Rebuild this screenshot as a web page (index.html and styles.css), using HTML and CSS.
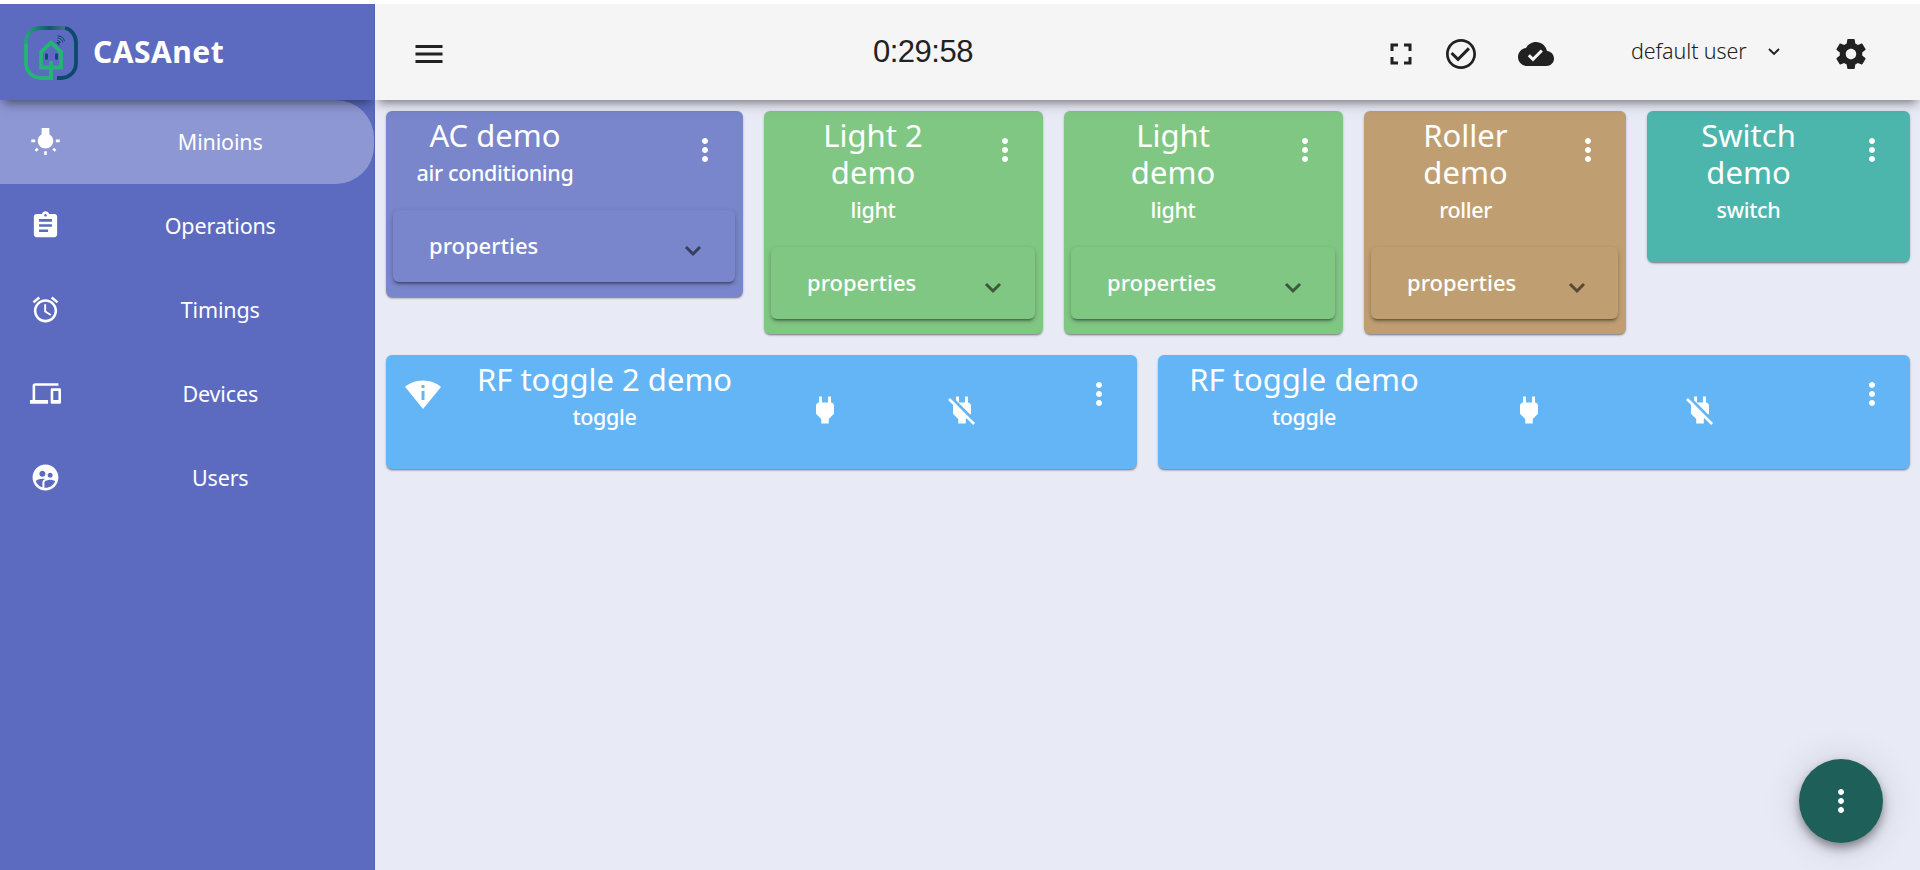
FILE: index.html
```html
<!DOCTYPE html>
<html lang="en">
<head>
<meta charset="utf-8">
<title>CASAnet</title>
<link rel="stylesheet" href="styles.css">
</head>
<body>
<svg class="defs" width="0" height="0">
  <symbol id="more" viewBox="0 0 24 24"><path d="M12 8c1.1 0 2-.9 2-2s-.9-2-2-2-2 .9-2 2 .9 2 2 2zm0 2c-1.1 0-2 .9-2 2s.9 2 2 2 2-.9 2-2-.9-2-2-2zm0 6c-1.1 0-2 .9-2 2s.9 2 2 2 2-.9 2-2-.9-2-2-2z"/></symbol>
  <symbol id="power" viewBox="0 0 24 24"><path d="M16.01 7L16 3h-2v4h-4V3H8v4h-.01C7 6.99 6 7.99 6 8.99v5.49L9.5 18v3h5v-3l3.5-3.51v-5.5c0-1-1-2-1.99-1.99z"/></symbol>
  <symbol id="power-off" viewBox="0 0 24 24"><path d="M18 14.49V9c0-1-1.01-2.01-2-2V3h-2v4h-4V3H8v2.48l9.51 9.5.49-.49zm-1.76 1.77L7.2 7.2l-.01.01L3.98 4 2.71 5.25l3.36 3.36C6.04 8.74 6 8.87 6 9v5.48L9.5 18v3h5v-3l.48-.48L19.45 22l1.26-1.28-4.47-4.46z"/></symbol>
  <symbol id="chevron" viewBox="0 0 18 12"><path d="M2 2l7 7 7-7" fill="none" stroke="currentColor" stroke-width="3"/></symbol>
</svg>
<div class="app">
  <aside class="sidebar">
    <div class="brand">
      <svg class="logo" viewBox="0 0 54 54">
        <defs><linearGradient id="top" x1="0" y1="0" x2="1" y2="0"><stop offset="0" stop-color="#22a877"/><stop offset=".6" stop-color="#12566c"/><stop offset="1" stop-color="#4d7186"/></linearGradient></defs>
        <g fill="none" stroke-width="3.8">
          <path d="M27 35v17H17C8 52 2 45 2 37V17" stroke="#22b573"/>
          <path d="M2 18C2 8 8 2 17 2h24" stroke="url(#top)"/>
          <path d="M41 2c6 1 11 7 11 15v20c0 9-7 15-15 15h-4" stroke="#0b4a6b"/>
          <path d="M17 41.500V26L27 16.500 37 26v15.500z" stroke="#22b573"/>
        </g>
        <path d="M21 28.500q1.500-2.500 3 0v4q-1.500 3-3 0zM31 28.500q1.500-2.500 3 0v4q-1.500 3-3 0z" fill="#0b4a6b"/>
        <path d="M32.500 16h3v4l-3-3z" fill="#0b4a6b"/>
        <g fill="none" stroke="#0b4a6b" stroke-width="1"><path d="M33.500 14.500q2 0 3 2.500M33.500 12q4 0 5.500 4.500M33.500 9.800q5.500.2 7.200 5.500"/></g>
      </svg>
      <span class="brand-name">CASAnet</span>
    </div>
    <nav class="nav">
      <a class="nav-item active"><svg class="nav-icon" viewBox="0 0 24 24"><path d="M3.550 18.540l1.410 1.410 1.800-1.790-1.410-1.410-1.800 1.790zM11 22.450h2V19.500h-2v2.950zM4 10.500H1v2h3v-2zm11-4.190V1.500H9v4.810C7.210 7.350 6 9.280 6 11.500c0 3.310 2.690 6 6 6s6-2.690 6-6c0-2.220-1.210-4.150-3-5.190zm5 4.190v2h3v-2h-3zm-2.760 7.660l1.790 1.800 1.410-1.410-1.800-1.790-1.400 1.400z"/></svg><span class="nav-label">Minioins</span></a>
      <a class="nav-item"><svg class="nav-icon" viewBox="0 0 24 24"><path d="M19 3h-4.180C14.400 1.840 13.300 1 12 1c-1.300 0-2.400.84-2.820 2H5c-1.100 0-2 .9-2 2v14c0 1.100.9 2 2 2h14c1.100 0 2-.9 2-2V5c0-1.100-.9-2-2-2zm-7 0c.55 0 1 .45 1 1s-.45 1-1 1-1-.45-1-1 .45-1 1-1zm2 14H7v-2h7v2zm3-4H7v-2h10v2zm0-4H7V7h10v2z"/></svg><span class="nav-label">Operations</span></a>
      <a class="nav-item"><svg class="nav-icon" viewBox="0 0 24 24"><path d="M22 5.720l-4.600-3.860-1.290 1.530 4.600 3.860L22 5.720zM7.880 3.390L6.600 1.860 2 5.710l1.290 1.530 4.590-3.850zM12.500 8H11v6l4.750 2.850.75-1.230-4-2.370V8zM12 4c-4.970 0-9 4.030-9 9s4.020 9 9 9c4.970 0 9-4.030 9-9s-4.030-9-9-9zm0 16c-3.870 0-7-3.130-7-7s3.130-7 7-7 7 3.130 7 7-3.130 7-7 7z"/></svg><span class="nav-label">Timings</span></a>
      <a class="nav-item"><svg class="nav-icon" viewBox="0 0 24 24"><path d="M4 6h18V4H4c-1.100 0-2 .9-2 2v11H0v3h14v-3H4V6zm19 2h-6c-.55 0-1 .45-1 1v10c0 .55.45 1 1 1h6c.55 0 1-.45 1-1V9c0-.55-.45-1-1-1zm-1 9h-4v-7h4v7z"/></svg><span class="nav-label">Devices</span></a>
      <a class="nav-item"><svg class="nav-icon" viewBox="0 0 24 24"><path d="M11.990 2c-5.520 0-10 4.480-10 10s4.480 10 10 10 10-4.480 10-10-4.480-10-10-10zm3.610 6.340c1.070 0 1.930.86 1.930 1.930 0 1.070-.86 1.930-1.930 1.930-1.070 0-1.930-.86-1.930-1.930-.01-1.070.86-1.930 1.930-1.930zm-6-1.580c1.300 0 2.360 1.060 2.360 2.360 0 1.300-1.060 2.360-2.360 2.360s-2.360-1.060-2.360-2.360c0-1.310 1.050-2.360 2.360-2.360zm0 9.130v3.750c-2.400-.75-4.300-2.600-5.140-4.960 1.050-1.120 3.670-1.690 5.140-1.690.53 0 1.200.08 1.900.22-1.640.87-1.900 2.020-1.900 2.680zM11.990 20c-.27 0-.53-.01-.79-.04v-4.070c0-1.420 2.940-2.130 4.400-2.130 1.070 0 2.920.39 3.840 1.150-1.170 2.970-4.060 5.090-7.450 5.090z"/></svg><span class="nav-label">Users</span></a>
    </nav>
  </aside>
  <div class="content">
    <header class="topbar">
      <svg class="icon menu-btn" viewBox="0 0 24 24"><path d="M3 18h18v-2H3v2zm0-5h18v-2H3v2zm0-7v2h18V6H3z"/></svg>
      <span class="clock">0:29:58</span>
      <div class="actions">
        <svg class="icon" viewBox="0 0 24 24"><path d="M7 14H5v5h5v-2H7v-3zm-2-4h2V7h3V5H5v5zm12 7h-3v2h5v-5h-2v3zM14 5v2h3v3h2V5h-5z"/></svg>
        <svg class="icon check" viewBox="0 0 24 24"><path d="M16.590 7.580L10 14.170l-3.590-3.580L5 12l5 5 8-8zM12 2C6.480 2 2 6.480 2 12s4.480 10 10 10 10-4.480 10-10S17.520 2 12 2zm0 18.200c-4.530 0-8.200-3.670-8.200-8.200S7.470 3.800 12 3.800s8.200 3.670 8.200 8.200-3.670 8.200-8.200 8.200z"/></svg>
        <svg class="icon cloud" viewBox="0 0 24 24"><path d="M19.350 10.040C18.670 6.590 15.640 4 12 4 9.110 4 6.600 5.640 5.350 8.040 2.340 8.360 0 10.910 0 14c0 3.310 2.690 6 6 6h13c2.760 0 5-2.240 5-5 0-2.640-2.050-4.780-4.650-4.960zM10 17l-3.500-3.500 1.410-1.410L10 14.170 15.180 9l1.410 1.410L10 17z"/></svg>
        <div class="user"><span class="user-name">default user</span><svg class="user-arrow" viewBox="0 0 12 8"><path d="M1 1l5 5 5-5" fill="none" stroke="currentColor" stroke-width="1.900"/></svg></div>
        <svg class="icon gear" viewBox="0 0 24 24"><path d="M19.430 12.980c.04-.32.07-.64.07-.98s-.03-.66-.07-.98l2.110-1.650c.19-.15.24-.42.12-.64l-2-3.460c-.12-.22-.39-.3-.61-.22l-2.490 1c-.52-.4-1.080-.73-1.690-.98l-.38-2.650C14.460 2.180 14.250 2 14 2h-4c-.25 0-.46.18-.49.42l-.38 2.650c-.61.25-1.170.59-1.690.98l-2.490-1c-.23-.09-.49 0-.61.22l-2 3.460c-.13.22-.07.49.12.64l2.110 1.650c-.04.32-.07.65-.07.98s.03.66.07.98l-2.110 1.650c-.19.15-.24.42-.12.64l2 3.460c.12.22.39.3.61.22l2.490-1c.52.4 1.080.73 1.690.98l.38 2.650c.03.24.24.42.49.42h4c.25 0 .46-.18.49-.42l.38-2.650c.61-.25 1.170-.59 1.690-.98l2.490 1c.23.09.49 0 .61-.22l2-3.460c.12-.22.07-.49-.12-.64l-2.110-1.650zM12 15.500c-1.930 0-3.500-1.570-3.500-3.500s1.570-3.500 3.500-3.500 3.500 1.570 3.500 3.500-1.570 3.500-3.500 3.500z"/></svg>
      </div>
    </header>
    <main class="board">
      <div class="row row-small">
        <section class="card indigo">
          <div class="head"><div class="titles"><h2 class="title">AC demo</h2><p class="kind">air conditioning</p></div><svg class="icon more"><use href="#more"/></svg></div>
          <div class="panel"><span class="panel-label">properties</span><svg class="chevron"><use href="#chevron"/></svg></div>
        </section>
        <section class="card green">
          <div class="head"><div class="titles"><h2 class="title">Light 2<br>demo</h2><p class="kind">light</p></div><svg class="icon more"><use href="#more"/></svg></div>
          <div class="panel"><span class="panel-label">properties</span><svg class="chevron"><use href="#chevron"/></svg></div>
        </section>
        <section class="card green">
          <div class="head"><div class="titles"><h2 class="title">Light<br>demo</h2><p class="kind">light</p></div><svg class="icon more"><use href="#more"/></svg></div>
          <div class="panel"><span class="panel-label">properties</span><svg class="chevron"><use href="#chevron"/></svg></div>
        </section>
        <section class="card brown narrow">
          <div class="head"><div class="titles"><h2 class="title">Roller<br>demo</h2><p class="kind">roller</p></div><svg class="icon more"><use href="#more"/></svg></div>
          <div class="panel"><span class="panel-label">properties</span><svg class="chevron"><use href="#chevron"/></svg></div>
        </section>
        <section class="card teal narrow">
          <div class="head"><div class="titles"><h2 class="title">Switch<br>demo</h2><p class="kind">switch</p></div><svg class="icon more"><use href="#more"/></svg></div>
        </section>
      </div>
      <div class="row row-wide">
        <section class="card blue">
          <div class="head wide-a"><svg class="icon more" viewBox="0 0 24 24"><path d="M12 3C6.950 3 3.150 4.850 0 7.230L12 22 24 7.250C20.850 4.870 17.050 3 12 3zm1 13h-2v-6h2v6zm-2-8V6h2v2h-2z"/></svg><div class="titles"><h2 class="title">RF toggle 2 demo</h2><p class="kind">toggle</p></div><svg class="icon plug"><use href="#power"/></svg><svg class="icon plug"><use href="#power-off"/></svg><svg class="icon more"><use href="#more"/></svg></div>
        </section>
        <section class="card blue">
          <div class="head wide-b"><div class="titles"><h2 class="title">RF toggle demo</h2><p class="kind">toggle</p></div><svg class="icon plug"><use href="#power"/></svg><svg class="icon plug"><use href="#power-off"/></svg><svg class="icon more"><use href="#more"/></svg></div>
        </section>
      </div>
    </main>
  </div>
</div>
<button class="fab" aria-label="More"><svg class="icon"><use href="#more"/></svg></button>
</body>
</html>
```
FILE: styles.css
```css
* { box-sizing: border-box; }
body {
  margin: 0;
  padding-top: 4px;
  height: 870px;
  overflow: hidden;
  background: #fff;
  font-family: "Noto Sans", "Open Sans", sans-serif;
  font-size: 22px;
}
svg { fill: currentColor; display: block; flex: none; }
.defs { position: absolute; }
.app { display: flex; height: 866px; background: #e8eaf6; }
.sidebar { width: 375px; flex: none; background: #5c6bc0; color: #fff; border-right: 1px solid #5262b3; }
.brand {
  height: 96px;
  display: flex;
  align-items: center;
  padding-left: 24px;
  gap: 15px;
  position: relative;
  background: #5c6bc0;
  box-shadow: 0 6px 9px -4px rgba(0, 0, 0, .45), 0 6px 15px 0 rgba(0, 0, 0, .1);
  clip-path: inset(0 0 -30px 0);
}
.logo { width: 54px; height: 54px; margin-top: 1px; }
.brand-name { font-size: 30px; font-weight: 700; line-height: 40px; letter-spacing: .5px; margin-top: -1px; }
.nav-item { display: flex; align-items: center; height: 84px; padding-left: 29.5px; border-radius: 0 38px 38px 0; }
.nav-item.active { background: rgba(255, 255, 255, .3); }
.nav-icon { width: 31px; height: 31px; margin-top: -1px; }
.nav-label { flex: 1; text-align: center; font-size: 21.5px; letter-spacing: -.15px; padding: 0 2px 0 8px; margin-top: -2px; }
.content { flex: 1; display: flex; flex-direction: column; }
.topbar {
  height: 96px;
  flex: none;
  display: flex;
  align-items: center;
  padding: 4px 51px 0 36px;
  background: #f5f5f5;
  color: #212121;
  box-shadow: 0 6px 9px -4px rgba(0, 0, 0, .45), 0 6px 15px 0 rgba(0, 0, 0, .1);
  clip-path: inset(0 0 -30px 0);
}
.icon { width: 36px; height: 36px; }
.clock { font: 31px/36px "Liberation Sans", Arial, sans-serif; letter-spacing: -.5px; margin: -5px 0 0 426px; }
.actions { display: flex; align-items: center; margin-left: auto; }
.check { margin-left: 24px; }
.cloud { margin-left: 39px; }
.user { display: flex; align-items: center; justify-content: space-between; margin: -7px 0 0 77px; width: 149px; }
.user-name { white-space: nowrap; font-size: 21.5px; font-weight: 300; letter-spacing: -.1px; }
.user-arrow { width: 12px; height: 8px; margin-top: 3px; }
.gear { margin-left: 53px; }
.board { padding: 11px 10px 0 11px; }
.row { display: grid; column-gap: 21px; align-items: start; }
.row-small { grid-template-columns: 357px 279px 279px 262px 263px; }
.row-wide { grid-template-columns: 751px 752px; margin-top: 21px; }
.card {
  border-radius: 6px;
  color: #fff;
  padding-bottom: 15px;
  box-shadow: 0 2px 2px -1px rgba(0, 0, 0, .4), 0 1px 3px rgba(0, 0, 0, .18);
}
.indigo { background: #7986cb; }
.green { background: #81c784; }
.brown { background: #bf9f72; }
.teal { background: #4db6ac; }
.blue { background: #64b5f6; }
.head { display: grid; grid-template-columns: 218px 36px; justify-content: space-between; padding-right: 20px; padding-bottom: 19px; }
.narrow .head { grid-template-columns: 203px 36px; }
.titles { text-align: center; padding-top: 6px; }
.title { margin: 0; font-weight: 400; font-size: 31px; line-height: 37px; white-space: nowrap; }
.kind { margin: 0; line-height: 37px; font-size: 21.5px; font-weight: 500; letter-spacing: -.35px; }
.more { margin-top: 21px; }
.plug { margin-top: 37px; }
.head.wide-a { grid-template-columns: 36px 366px 137px 137px 36px; justify-content: start; padding-left: 19px; }
.head.wide-a .titles { margin-left: 36px; width: 255px; }
.head.wide-b { grid-template-columns: 353px 171px 172px 36px; justify-content: start; }
.head.wide-b .titles { width: 292px; }
.panel {
  margin: 0 8px 0 7px;
  height: 72px;
  border-radius: 6px;
  display: flex;
  align-items: center;
  justify-content: space-between;
  padding: 0 33px 0 36px;
  box-shadow: 0 3px 3px -2px rgba(0, 0, 0, .45), 0 2px 5px rgba(0, 0, 0, .24);
}
.narrow .panel { padding-right: 32px; }
.panel-label { line-height: 36px; font-weight: 500; margin-top: -2px; }
.chevron { width: 18px; height: 12px; margin-top: 9px; color: rgba(0, 0, 0, .54); }
.fab {
  position: fixed;
  right: 37px;
  bottom: 27px;
  width: 84px;
  height: 84px;
  border: 0;
  border-radius: 50%;
  background: #1f5f5a;
  color: #fff;
  display: grid;
  place-items: center;
  padding: 0;
  box-shadow: 0 5px 8px -1px rgba(0, 0, 0, .3), 0 6px 15px rgba(0, 0, 0, .2), 0 2px 36px 4px rgba(0, 0, 0, .1);
}
```
